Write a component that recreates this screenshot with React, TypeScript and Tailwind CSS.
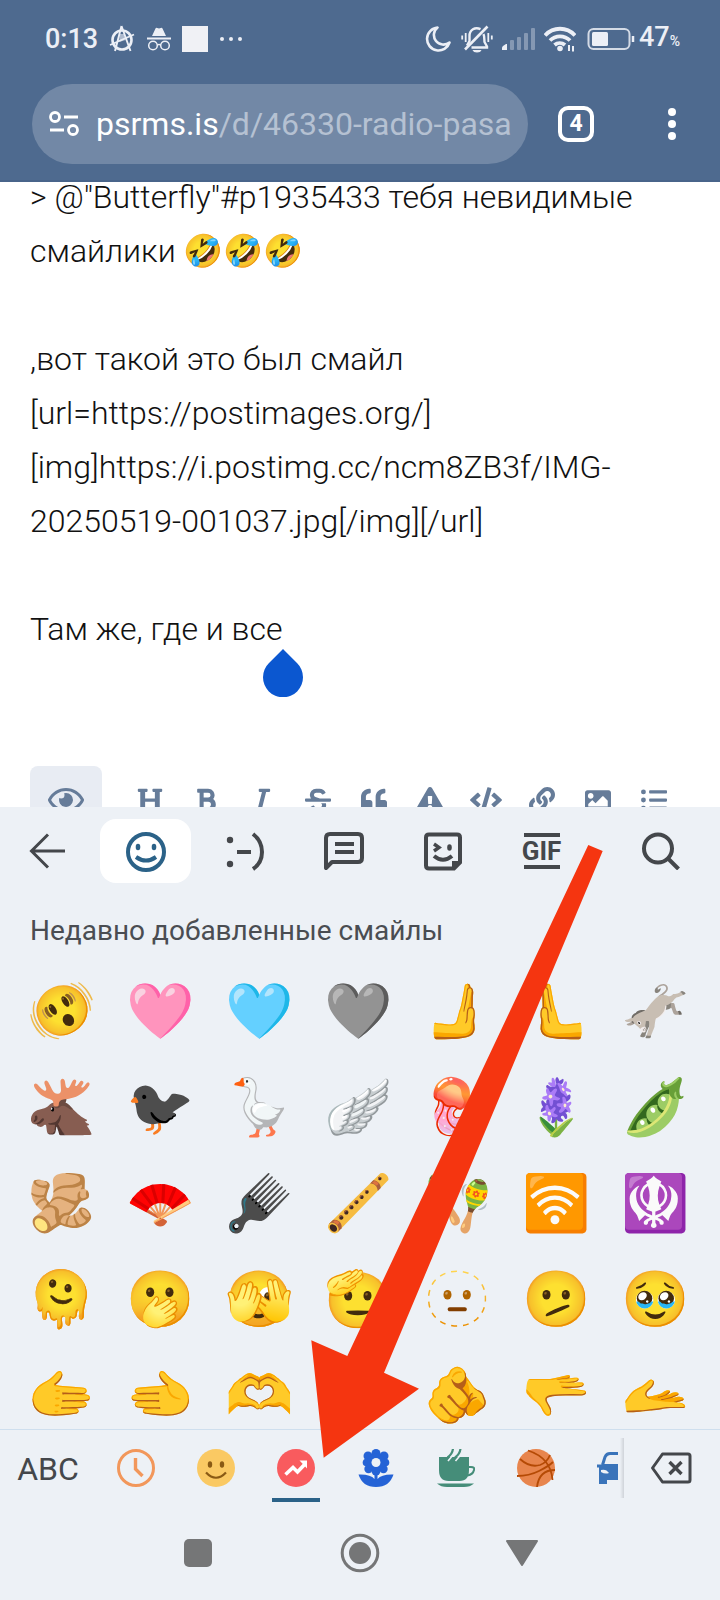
import React from 'react';
import {
  FaBold,
  FaCode,
  FaExclamationTriangle,
  FaHeading,
  FaImage,
  FaItalic,
  FaLink,
  FaListUl,
  FaQuoteLeft,
  FaRegEye,
  FaStrikethrough,
} from 'react-icons/fa';

const message = `> @"Butterfly"#p1935433 тебя невидимые смайлики 🤣🤣🤣

,вот такой это был смайл
[url=https://postimages.org/]
[img]https://i.postimg.cc/ncm8ZB3f/IMG-20250519-001037.jpg[/img][/url]

Там же, где и все`;

const formatButtons = [
  { name: 'Заголовок', icon: FaHeading },
  { name: 'Жирный', icon: FaBold },
  { name: 'Курсив', icon: FaItalic },
  { name: 'Зачёркнутый', icon: FaStrikethrough },
  { name: 'Цитата', icon: FaQuoteLeft },
  { name: 'Спойлер', icon: FaExclamationTriangle },
  { name: 'Код', icon: FaCode },
  { name: 'Ссылка', icon: FaLink },
  { name: 'Изображение', icon: FaImage },
  { name: 'Список', icon: FaListUl },
];

const emojis = [
  '🫨', '🩷', '🩵', '🩶', '🫸', '🫷', '🫏',
  '🫎', '🐦‍⬛', '🪿', '🪽', '🪼', '🪻', '🫛',
  '🫚', '🪭', '🪮', '🪈', '🪇', '🛜', '🪯',
  '🫠', '🫢', '🫣', '🫡', '🫥', '🫤', '🥹',
  '🫱', '🫲', '🫶', '🫰', '🫵', '🫳', '🫴',
];

const StatusBar: React.FC = () => (
  <div className="flex items-center justify-between h-[84px] pl-[45px] pr-10 pb-[6px] text-[#eceff6]">
    <div className="flex items-center">
      <span className="w-16 text-[27px] leading-8 font-medium">0:13</span>
      {/* Anarchy sign */}
      <svg className="w-[26px] h-7" viewBox="0 0 26 28" fill="none" stroke="currentColor" aria-hidden="true">
        <circle cx="13" cy="15" r="9.5" strokeWidth="2.6" />
        <path d="M12.5 1L6 26M12.5 1L21.5 26M1 20L25 9.500" strokeWidth="1.9" />
        <path d="M10.500 9h4.500l1.500 6-6 2z" fill="currentColor" stroke="none" opacity=".6" />
      </svg>
      {/* Incognito */}
      <svg className="ml-3 w-6 h-7" viewBox="0 0 24 28" fill="currentColor" aria-hidden="true">
        <path d="M5 11L8.500 3.500Q9 2.500 10.200 3L12 3.600 13.800 3Q15 2.500 15.500 3.500L19 11z" />
        <path d="M0 12.500h24v2H0z" />
        <g fill="none" stroke="currentColor" strokeWidth="1.500">
          <circle cx="6" cy="20.500" r="4.300" />
          <circle cx="18" cy="20.500" r="4.300" />
          <path d="M10.300 20q1.700-1.200 3.400 0" />
        </g>
      </svg>
      <span className="ml-[11px] size-[26px] bg-[#f0f1f5]" />
      <span className="flex gap-[5px] ml-3">
        <span className="size-1 rounded-full bg-current" />
        <span className="size-1 rounded-full bg-current" />
        <span className="size-1 rounded-full bg-current" />
      </span>
    </div>

    <div className="flex items-center">
      <svg className="w-[26px] h-7" viewBox="0 0 26 28" fill="none" stroke="currentColor" strokeWidth="2.600" strokeLinejoin="round" aria-hidden="true">
        <path d="M12.500 2.500A11.500 11.500 0 1 0 24.500 17.500A9.500 9.500 0 0 1 12.500 2.500z" />
      </svg>
      {/* Muted bell */}
      <svg className="ml-[10px] w-8 h-7" viewBox="0 0 32 28" fill="none" stroke="currentColor" strokeWidth="2.400" aria-hidden="true">
        <path d="M19.500 4.200C14 1.500 8.500 5 8.500 11v5L6 20.500M22.500 9c1 2 .8 6 1 8l2.500 4.500v1H10.500" />
        <path d="M4 24.500L26.500 1.500" strokeWidth="2.600" />
        <path d="M11.500 25h9q-1 2.500-4.500 2.500t-4.500-2.500z" fill="currentColor" stroke="none" />
        <path d="M1.200 10.500v4M4.700 8v9M27.300 8v9M30.800 10.500v4" strokeWidth="1.800" />
      </svg>
      <svg className="ml-[9px] w-[34px] h-6" viewBox="0 0 34 24" fill="currentColor" aria-hidden="true">
        <path d="M0 23v-2q0-1 1-2l3-2h1v6z" />
        <g opacity=".35">
          <rect x="8" y="13" width="4" height="10" rx="1" />
          <rect x="15" y="10" width="4" height="13" rx="1" />
          <rect x="22" y="6" width="4" height="17" rx="1" />
          <rect x="29" y="1" width="4" height="22" rx="1" />
        </g>
      </svg>
      <svg className="ml-2 w-8 h-7" viewBox="0 0 32 28" fill="none" stroke="currentColor" strokeWidth="3.800" aria-hidden="true">
        <path d="M1 10.500A20 20 0 0 1 31 10.500M6 15.500A14 14 0 0 1 26 15.500M10.500 20A8 8 0 0 1 21 20" />
        <circle cx="16" cy="23.500" r="2.800" fill="currentColor" stroke="none" />
        <path d="M25 20v6M29 21v5.500" strokeWidth="2" />
      </svg>
      <svg className="ml-[11px] w-12 h-6" viewBox="0 0 48 24" fill="none" stroke="currentColor" strokeWidth="2" aria-hidden="true">
        <rect x="1.500" y="2" width="41" height="20" rx="5" opacity=".85" />
        <rect x="5" y="5" width="16" height="14" rx="1.500" fill="currentColor" stroke="none" />
        <path d="M46 9v6" strokeWidth="2.500" />
      </svg>
      <span className="ml-1 text-[27px] leading-8 font-medium">
        47<span className="text-[14px]">%</span>
      </span>
    </div>
  </div>
);

const AddressBar: React.FC = () => (
  <div className="flex items-center pl-8 pr-11 pb-4">
    <button className="flex flex-1 min-w-0 items-center h-20 rounded-full bg-[#7288a6] pl-[17px] pr-4 text-left">
      <svg className="shrink-0 w-[30px] h-[26px]" viewBox="0 0 30 26" fill="none" stroke="white" strokeWidth="2.800" aria-hidden="true">
        <circle cx="6" cy="6" r="4.500" />
        <path d="M15 6h14M1 19h14" />
        <circle cx="24" cy="19" r="4.500" />
      </svg>
      <span className="ml-[17px] flex-1 overflow-hidden whitespace-nowrap text-[32px] leading-10 text-[#b5c1d2]">
        <span className="text-white">psrms.is</span>/d/46330-radio-pasa
      </span>
    </button>
    <button
      aria-label="4 вкладки"
      className="ml-[30px] flex items-center justify-center size-9 rounded-[10px] border-4 border-white text-[23px] leading-6 font-bold text-white"
    >
      4
    </button>
    <button aria-label="Меню" className="ml-[74px] flex flex-col gap-1 text-white">
      <span className="size-2 rounded-full bg-current" />
      <span className="size-2 rounded-full bg-current" />
      <span className="size-2 rounded-full bg-current" />
    </button>
  </div>
);

const Editor: React.FC = () => (
  <main className="relative flex-1 min-h-0 overflow-hidden bg-white px-[30px]">
    <textarea
      aria-label="Сообщение"
      rows={11}
      defaultValue={message}
      className="block -mt-3 w-full resize-none overflow-hidden text-[32px] leading-[54px] font-light text-[#111] outline-none"
    />
    {/* Text cursor handle */}
    <svg className="absolute left-[263px] top-[467px] w-10 h-12" viewBox="0 0 40 48" fill="#0b57d0" aria-hidden="true">
      <path d="M20 0L34 14A20 20 0 1 1 6 14z" />
    </svg>
    <div className="flex items-center mt-[2px] text-[#667c99]">
      <button aria-label="Просмотр" className="flex items-center justify-center w-[72px] h-[68px] mr-5 rounded-lg bg-[#e8ecf3]">
        <FaRegEye className="w-9 h-8" />
      </button>
      {formatButtons.map(({ name, icon: Icon }) => (
        <button key={name} aria-label={name} className="flex items-center justify-center w-14 h-[68px]">
          <Icon className="w-8 h-[26px]" />
        </button>
      ))}
    </div>
  </main>
);

const KeyboardTabs: React.FC = () => (
  <div className="flex items-center pt-3 text-[#44474b]">
    <button aria-label="Назад" className="flex items-center justify-center w-24 h-16 pr-[2px]">
      <svg className="w-9 h-9" viewBox="0 0 36 36" fill="none" stroke="currentColor" strokeWidth="3" aria-hidden="true">
        <path d="M36 18H3M19 1.500L2.500 18 19 34.500" />
      </svg>
    </button>
    <button aria-label="Смайлы" className="flex items-center justify-center w-[91px] h-16 mx-1 rounded-2xl bg-white text-[#2b6288]">
      <svg className="w-10 h-[42px]" viewBox="0 0 40 42" fill="none" stroke="currentColor" strokeWidth="4" aria-hidden="true">
        <circle cx="20" cy="22" r="18" />
        <path d="M10 27Q20 34 30 27" />
        <ellipse cx="12" cy="17" rx="2.300" ry="3.300" fill="currentColor" stroke="none" />
        <ellipse cx="28" cy="17" rx="2.300" ry="3.300" fill="currentColor" stroke="none" />
      </svg>
    </button>
    <button aria-label="Каомодзи" className="flex items-center justify-center w-[99px] h-16">
      <svg className="w-10 h-10" viewBox="0 0 40 40" fill="none" stroke="currentColor" strokeWidth="4" aria-hidden="true">
        <circle cx="5" cy="9" r="3.200" fill="currentColor" stroke="none" />
        <circle cx="5" cy="33" r="3.200" fill="currentColor" stroke="none" />
        <path d="M12 21h14M28 3Q37 10 37 21T28 38" />
      </svg>
    </button>
    <button aria-label="Фразы" className="flex items-center justify-center w-[99px] h-16">
      <svg className="w-[42px] h-[42px]" viewBox="0 0 42 42" fill="none" stroke="currentColor" strokeWidth="4" aria-hidden="true">
        <path d="M3 38V8Q3 4 7 4H35Q39 4 39 8V28Q39 32 35 32H9z" strokeLinejoin="round" />
        <path d="M12 14h19M12 22h19" />
      </svg>
    </button>
    <button aria-label="Стикеры" className="flex items-center justify-center w-[99px] h-16">
      <svg className="w-[38px] h-[40px]" viewBox="0 0 38 40" fill="none" stroke="currentColor" strokeWidth="4" aria-hidden="true">
        <path d="M5 3.500H33Q36 3.500 36 6.500V31.500L30 37.500H5Q2 37.500 2 34.500V6.500Q2 3.500 5 3.500z" />
        <path d="M28 30h8v3l-6 6h-2z" fill="currentColor" stroke="none" />
        <path d="M10 13l5 3.500-5 3.500" strokeWidth="3.400" />
        <path d="M10 25Q19 32.500 28 25" />
        <ellipse cx="25.500" cy="16.500" rx="2.300" ry="3.200" fill="currentColor" stroke="none" />
      </svg>
    </button>
    <button aria-label="GIF" className="flex items-center justify-center w-[99px] h-16">
      <span className="flex items-center justify-center w-9 h-9 border-y-4 border-current text-[26px] leading-7 font-bold">
        GIF
      </span>
    </button>
    <button aria-label="Поиск" className="flex flex-1 items-center justify-center h-16 pl-[10px]">
      <svg className="w-[38px] h-[38px]" viewBox="0 0 38 38" fill="none" stroke="currentColor" strokeWidth="4" aria-hidden="true">
        <circle cx="16" cy="16.500" r="14" />
        <path d="M26 26.500L36.500 37" />
      </svg>
    </button>
  </div>
);

const categories = [
  {
    name: 'Недавние',
    icon: (
      <g fill="none" stroke="#f2975b" strokeWidth="3">
        <circle cx="19" cy="19" r="17.500" />
        <path d="M18.500 9v11l7 7" strokeWidth="3.400" />
      </g>
    ),
  },
  {
    name: 'Смайлы',
    icon: (
      <>
        <circle cx="19" cy="19" r="19" fill="#fac963" />
        <ellipse cx="13" cy="15.500" rx="2.200" ry="3.200" fill="#8a5a14" />
        <ellipse cx="25" cy="15.500" rx="2.200" ry="3.200" fill="#8a5a14" />
        <path d="M9 23.500Q19 34 29 23.500" fill="none" stroke="#8a5a14" strokeWidth="2.200" />
      </>
    ),
  },
  {
    name: 'Популярные',
    active: true,
    icon: (
      <>
        <circle cx="19" cy="19" r="19" fill="#f95b5e" />
        <path d="M8.500 25.500l7.500-7 4.500 4.500 8-8.500" fill="none" stroke="white" strokeWidth="3.600" />
        <path d="M22.500 11.500h7.500v8z" fill="white" />
      </>
    ),
  },
  {
    name: 'Природа',
    icon: (
      <g fill="#2563d6">
        <circle cx="19" cy="4.500" r="4.500" />
        <circle cx="27" cy="7" r="4.500" />
        <circle cx="11" cy="7" r="4.500" />
        <circle cx="9.500" cy="13.500" r="3.800" />
        <circle cx="28.500" cy="13.500" r="3.800" />
        <circle cx="11.500" cy="20" r="4.200" />
        <circle cx="26.500" cy="20" r="4.200" />
        <circle cx="19" cy="22" r="4.500" />
        <circle cx="19" cy="13.500" r="9" />
        <circle cx="19" cy="13.500" r="4.500" fill="#edf1f6" />
        <path d="M17.500 24h3v6q4-5 16-4.500-4 12.500-17.500 12.500T1.500 25.500q12-.5 16 4.500z" />
      </g>
    ),
  },
  {
    name: 'Еда',
    icon: (
      <g fill="#458d79">
        <path d="M2 8h30v13q0 11-9.500 11h-11Q2 32 2 21z" />
        <path d="M31 18h3q4 0 3 3-1 4.500-6.500 5.500" fill="none" stroke="#458d79" strokeWidth="2" />
        <path d="M0 34.500h37q-4 3.500-10 3.500H10q-6 0-10-3.500z" />
        <path d="M11 12l5.500-6.500V-1M18.500 12l5.500-6.500V-1" fill="none" stroke="#edf1f6" strokeWidth="1.600" />
        <path d="M10.500 8.500q5-3.500 5.500-9M18 8.500q5-3.500 5.500-9" fill="none" stroke="#458d79" strokeWidth="2.200" />
      </g>
    ),
  },
  {
    name: 'Спорт',
    icon: (
      <>
        <circle cx="19" cy="19" r="19" fill="#e8854d" />
        <path
          d="M11 1.500Q34 9 35.500 31M3 10q10 9 20 6Q30 13.500 33 6M0 27q12 0 22-5t14-9M20 38q2-17 18-17"
          fill="none"
          stroke="#b54a05"
          strokeWidth="1.800"
        />
      </>
    ),
  },
  {
    name: 'Транспорт',
    icon: (
      <g fill="#3a74ba">
        <path d="M5.500 16L8 8Q9.500 4.500 13 4.500H26Q28.500 4.500 30 8L32.500 16" fill="none" stroke="#3a74ba" strokeWidth="3" />
        <path d="M0 15.500h4.500l2-.500h25l2 .5H38v3h-2V35h-7v-4H10v4H2V18.500H0z" />
        <path d="M4 21q5-1.500 8 3-4 1.500-8-1z" fill="#edf1f6" />
      </g>
    ),
  },
];

const CategoryBar: React.FC = () => (
  <div className="flex items-center h-[79px] border-t border-[#cfdfee] text-[#44474b]">
    <button className="w-24 h-full text-[32px] leading-10">ABC</button>
    <div className="flex flex-1 min-w-0 h-full overflow-hidden">
      {categories.map((category) => (
        <button
          key={category.name}
          aria-label={category.name}
          className="flex flex-col shrink-0 items-center justify-end w-20 h-full pb-[6px]"
        >
          <svg className="w-[38px] h-[38px]" viewBox="0 0 38 38" aria-hidden="true">
            {category.icon}
          </svg>
          <span className={`mt-[11px] w-12 h-1 ${category.active ? 'bg-[#2b6288]' : ''}`} />
        </button>
      ))}
    </div>
    <span className="ml-[2px] mb-[2px] w-1 h-15 bg-linear-to-r from-transparent to-[#cfd3d9]" />
    <button aria-label="Удалить" className="flex items-center justify-center w-24 h-full pb-[3px] pr-[2px]">
      <svg className="w-[42px] h-8" viewBox="0 0 42 32" fill="none" stroke="currentColor" strokeWidth="3" aria-hidden="true">
        <path d="M2.500 16L12.500 2H38Q40 2 40 4V28Q40 30 38 30H12.500z" strokeLinejoin="round" />
        <path d="M19.500 10l12 12M31.500 10l-12 12" strokeWidth="3.400" />
      </svg>
    </button>
  </div>
);

const SystemNav: React.FC = () => (
  <nav className="flex items-center justify-center h-[92px] pb-[2px] text-[#757677]">
    <button aria-label="Недавние приложения" className="flex items-center justify-center w-[162px] h-12">
      <span className="size-[28px] rounded-[5px] bg-current" />
    </button>
    <button aria-label="Домой" className="flex items-center justify-center w-[162px] h-12">
      <svg className="w-10 h-10" viewBox="0 0 40 40" aria-hidden="true">
        <circle cx="20" cy="20" r="17.800" fill="none" stroke="currentColor" strokeWidth="3" />
        <circle cx="20" cy="20" r="11" fill="currentColor" />
      </svg>
    </button>
    <button aria-label="Скрыть клавиатуру" className="flex items-center justify-center w-[162px] h-12">
      <svg className="w-8 h-[26px]" viewBox="0 0 32 26" fill="currentColor" stroke="currentColor" strokeWidth="2" strokeLinejoin="round" aria-hidden="true">
        <path d="M1 1h30L16 25z" />
      </svg>
    </button>
  </nav>
);

const App: React.FC = () => {
  return (
    <div className="flex flex-col h-screen overflow-hidden bg-[#edf1f6] font-['Roboto','Noto_Color_Emoji',sans-serif]">
      <header className="bg-[#4e6a8f] border-b-2 border-[#48648a]">
        <StatusBar />
        <AddressBar />
      </header>
      <Editor />
      <section className="relative shrink-0 bg-[#edf1f6]">
        <KeyboardTabs />
        <h2 className="mt-8 px-[30px] text-[28px] leading-8 text-[#4a4d52]">Недавно добавленные смайлы</h2>
        <div className="h-[482px] overflow-hidden">
          <div className="grid grid-cols-7 pl-3 pr-[15px] pt-4">
            {emojis.map((emoji) => (
              <button key={emoji} className="flex items-center justify-center h-24 text-[55px] leading-[64px]">
                {emoji}
              </button>
            ))}
          </div>
        </div>
        <CategoryBar />
        {/* Red pointer drawn over the keyboard */}
        <svg className="absolute left-[311px] top-[38px] w-[292px] h-[613px] pointer-events-none" viewBox="311 845 292 613" fill="#f53510" aria-hidden="true">
          <path d="M588.300 845L602.700 851 384 1372.700 419 1388.700 323.700 1457.700 311.300 1340.300 347.300 1356z" />
        </svg>
      </section>
      <SystemNav />
    </div>
  );
};

export default App;
